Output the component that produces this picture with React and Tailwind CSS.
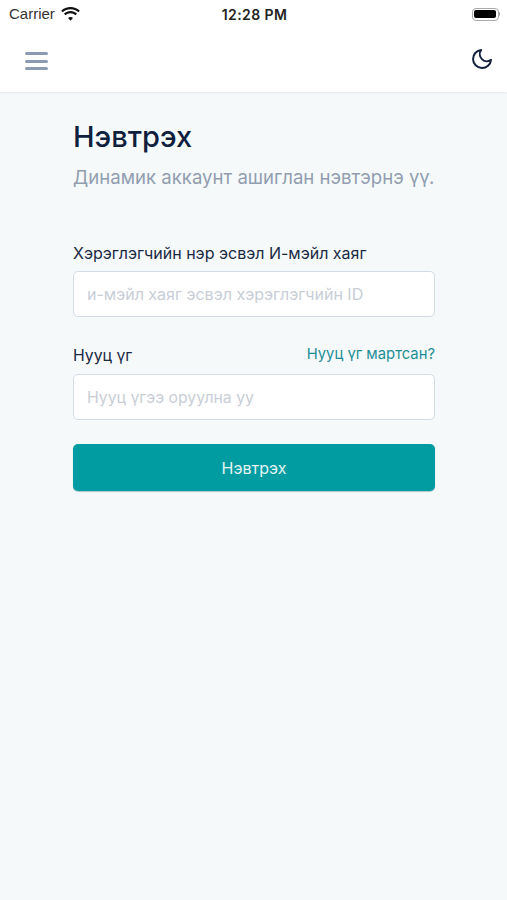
const App = () => {
  return (
    <div className="flex h-[900px] w-[507px] flex-col overflow-hidden bg-[#f5f9fa] font-['Inter',sans-serif]">
      {/* Status bar + nav */}
      <div className="h-[92px] shrink-0 bg-white shadow-[0_1px_2px_rgba(30,50,70,0.08)]">
        <div className="flex h-[28px] items-center justify-between pl-[9px] pr-[7px]">
          <div className="flex w-[150px] items-center gap-[6px] font-['Liberation_Sans',sans-serif] text-[15px] text-[#333]">
            <span className="mt-[1px]">Carrier</span>
            <svg width="19" height="14" viewBox="0 0 19 14" className="-mt-[1px]">
              <path d="M9.5 2.2c3 0 5.8 1.100 7.900 3.100l1.400-1.600C16.300 1.300 13 0 9.500 0S2.700 1.300.2 3.700l1.400 1.600c2.100-2 4.900-3.100 7.900-3.100z" fill="#111" />
              <path d="M9.500 6.200c1.900 0 3.700.7 5.100 2l1.400-1.600C14.200 5 11.900 4 9.500 4S4.800 5 3 6.600l1.400 1.600c1.400-1.300 3.200-2 5.100-2z" fill="#111" />
              <path d="M9.500 10c-1 0-1.800.4-2.500 1l2.500 2.800L12 11c-.7-.6-1.500-1-2.500-1z" fill="#111" />
            </svg>
          </div>
          <span className="font-['Inter',sans-serif] text-[14px] font-semibold tracking-[0.4px] text-[#222]">12:28 PM</span>
          <div className="flex w-[150px] justify-end">
            <div className="flex items-center">
              <div className="flex h-[13px] w-[27px] items-center rounded-[4px] border border-[#aaa] p-[1.5px]">
                <div className="h-full w-full rounded-[2px] bg-black" />
              </div>
              <div className="h-[4px] w-[1.5px] rounded-r-sm bg-[#aaa]" />
            </div>
          </div>
        </div>
        <div className="flex h-[64px] items-center justify-between pl-[25px] pr-[13px]">
          <div className="mt-[2px] flex w-[23px] flex-col gap-[4.5px]">
            <div className="h-[3px] rounded-sm bg-[#8c9bb3]" />
            <div className="h-[3px] rounded-sm bg-[#8c9bb3]" />
            <div className="h-[3px] rounded-sm bg-[#8c9bb3]" />
          </div>
          <svg width="24" height="24" viewBox="0 0 24 24" fill="none" stroke="#14213d" strokeWidth="2" strokeLinecap="round" strokeLinejoin="round" className="-mt-[3px]">
            <path d="M21 12.790A9 9 0 1 1 11.210 3 7 7 0 0 0 21 12.790z" />
          </svg>
        </div>
      </div>

      {/* Login form */}
      <div className="flex flex-col pl-[73px] pr-[72px]">
        <h1 className="mt-[26px] text-[29px] font-medium leading-[38px] text-[#0f1f3d]">Нэвтрэх</h1>
        <p className="mt-[7px] whitespace-nowrap text-[18.6px] leading-[28px] text-[#929eaf]">Динамик аккаунт ашиглан нэвтэрнэ үү.</p>

        <label className="mt-[50px] text-[16px] leading-[24px] text-[#1b2a44]">Хэрэглэгчийн нэр эсвэл И-мэйл хаяг</label>
        <input
          placeholder="и-мэйл хаяг эсвэл хэрэглэгчийн ID"
          className="mt-[6px] h-[46px] rounded-[5px] border-[1.5px] border-[#d3dbe5] bg-white px-[13px] text-[16px] outline-none placeholder:text-[#c8ced6]"
        />

        <div className="mt-[26px] flex items-end justify-between">
          <label className="text-[15.8px] leading-[24px] text-[#1b2a44]">Нууц үг</label>
          <a className="mb-[3px] text-[14.8px] leading-[22px] text-[#1e8e96]">Нууц үг мартсан?</a>
        </div>
        <input
          type="text"
          placeholder="Нууц үгээ оруулна уу"
          className="mt-[6px] h-[46px] rounded-[5px] border-[1.5px] border-[#d3dbe5] bg-white px-[13px] text-[15.8px] outline-none placeholder:text-[#c8ced6]"
        />

        <button className="mt-[24px] h-[47px] rounded-[5px] bg-[#009ca1] text-[16px] text-[#e4f4f5] shadow-[0_1px_1px_rgba(0,80,90,0.3)]">Нэвтрэх</button>
      </div>
    </div>
  );
};

export default App;
